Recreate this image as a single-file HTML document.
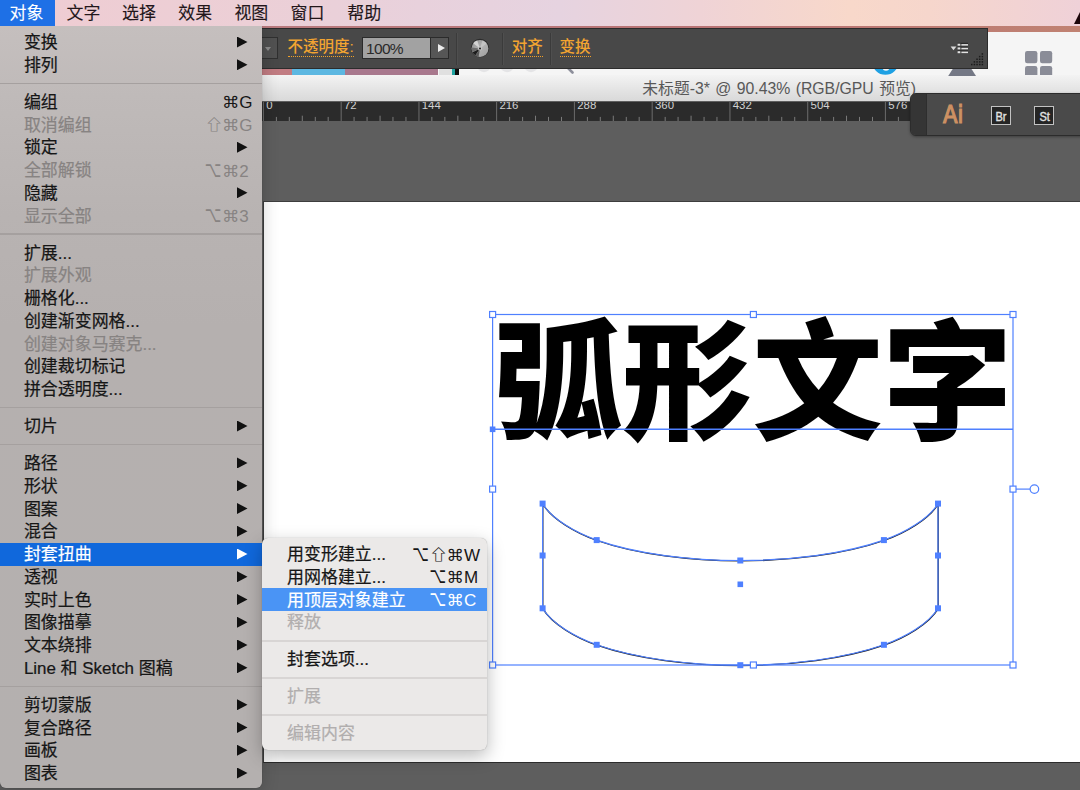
<!DOCTYPE html>
<html lang="zh-CN">
<head>
<meta charset="utf-8">
<title>弧形文字 - 封套扭曲</title>
<style>
*{box-sizing:border-box;margin:0;padding:0}
html,body{width:1080px;height:790px;overflow:hidden;background:#5e5e5e}
body{position:relative;font-family:"Liberation Sans","Noto Sans CJK SC",sans-serif;color:#111}
.abs{position:absolute}
/* ---------- desktop / menubar ---------- */
#menubar{left:0;top:0;width:1080px;height:26.2px;
 background:linear-gradient(90deg,#efccd2 0,#eccfd6 250px,#e8d1dc 420px,#e6d3e0 560px,#efd3d6 700px,#f8d8ca 850px,#f6d6cc 930px,#efd1d8 1080px)}
#menubar .mi{position:absolute;top:0;height:26.2px;line-height:28px;font-size:16.95px;color:#22161a;white-space:nowrap;-webkit-text-stroke:.12px currentColor;margin-left:-.5px}
#menubar .sel{left:0;width:55px;background:#1e70e6;margin-left:0}
#menubar .sel span{color:#fff}
#corner{right:0;top:12px;width:0;height:0;border-left:6px solid transparent;border-bottom:12px solid #1c060a}
/* ---------- window chrome behind ---------- */
#redstrip{left:262px;top:26px;width:818px;height:6px;background:linear-gradient(90deg,#b97a7e,#b87273 60%,#c08272)}
#lightbg{left:262px;top:32px;width:818px;height:43px;background:#f5f5f5}
#titlebar{left:262px;top:75px;width:818px;height:26px;background:linear-gradient(#f3f3f3,#e3e3e3 60%,#d9d9d9);}
#title{left:642.3px;top:75.5px;height:26px;line-height:26px;font-size:15.8px;word-spacing:1px;color:#585858;white-space:nowrap}
#ruler{left:262px;top:101.6px;width:660px;height:19.1px;background:#2b2b2b;overflow:hidden}
#pasteboard{left:262px;top:120.7px;width:818px;height:669px;background:#5e5e5e}
#artboard{left:263px;top:201.4px;width:830px;height:562px;background:#fff;border:1px solid #3e3e3e;border-bottom-color:#2c2c2c}
/* ---------- control bar ---------- */
#ctrl{left:262px;top:27.8px;width:725.8px;height:41.1px;background:#484848;border-top:1px solid #2a2a2a;border-bottom:1px solid #2c2c2c;border-right:1px solid #2c2c2c}
.olink{position:absolute;color:#f2a431;font-weight:500;font-size:15.5px;line-height:20px;white-space:nowrap;border-bottom:1px dotted #f0a028;height:19.8px}
.vsep{top:4.2px;width:2px;height:32px;background:#3b3b3b;border-right:1px solid #4f4f4f}
.aib{top:12px;width:20px;height:18.8px;border:1.5px solid #c2c2c2;background:#252525;color:#e2e2e2;font-size:12px;line-height:20.8px;text-align:center;-webkit-text-stroke:.35px #e2e2e2}
.aib span{display:inline-block;transform:scaleX(.92)}
/* ---------- menus ---------- */
#menu{left:0;top:26px;width:262px;height:762.2px;background:linear-gradient(#c5bfbe 0,#bfbab9 70px,#b8b3b2 190px,#b5b0af 300px,#b4b0af 100%);border-radius:0 0 6px 6px;box-shadow:0 3px 18px rgba(0,0,0,.2),0 0 1px rgba(0,0,0,.4);clip-path:inset(0 -40px -40px -40px)}
.row{position:absolute;left:0;width:262px;height:22.76px;line-height:22.76px;font-size:16.95px;color:#161616;white-space:nowrap}
.row .t{position:absolute;left:23.9px;top:1.5px;height:22.76px;-webkit-text-stroke:.22px currentColor}
.row.dis{color:#878382}
.row.hl{background:#1068dc;color:#fff;height:23.4px}
.sep{position:absolute;left:0;width:262px;height:1.2px;background:#a5a09f}
.arr{position:absolute;left:237px;top:5.9px;width:10.5px;height:11px;background:#111;clip-path:polygon(0 0,100% 50%,0 100%)}
.hl .arr{background:#fff}
.scs{position:absolute;left:0;top:0;overflow:visible}
.scs text{fill:currentColor}
#sub{left:262.4px;top:538.3px;width:224.6px;height:211.8px;background:#ebe9e8;border-radius:6px;box-shadow:0 6px 18px rgba(0,0,0,.28),0 0 1px rgba(0,0,0,.35)}
#sub .row{width:224.6px}
#sub .row .t{left:24.7px}
#sub .row.dis{color:#b1aeae}
#sub .row.hl{background:#4a94f5;color:#fff;height:22.9px}
#sub .sep{width:224.6px;background:#d8d5d4;height:1.6px}
</style>
</head>
<body>
<div id="menubar" class="abs">
  <div class="mi sel"><span style="position:absolute;left:9.6px">对象</span></div>
  <div class="mi" style="left:67px">文字</div>
  <div class="mi" style="left:122.6px">选择</div>
  <div class="mi" style="left:178.8px">效果</div>
  <div class="mi" style="left:234.9px">视图</div>
  <div class="mi" style="left:291px">窗口</div>
  <div class="mi" style="left:347.8px">帮助</div>
  <div id="corner" class="abs"></div>
</div>
<div id="redstrip" class="abs"></div>
<div id="lightbg" class="abs"></div>
<div id="titlebar" class="abs"></div>
<div id="title" class="abs">未标题-3* @ 90.43% (RGB/GPU 预览)</div>
<div id="ruler" class="abs"><svg width="660" height="19.1" viewBox="0 0 660 19.1" style="position:absolute;left:0;top:0">
<g stroke="#6c6c6c" stroke-width="1">
<line x1="1.3" y1="0" x2="1.3" y2="19.1"/>
<line x1="79.1" y1="0" x2="79.1" y2="19.1"/>
<line x1="156.9" y1="0" x2="156.9" y2="19.1"/>
<line x1="234.6" y1="0" x2="234.6" y2="19.1"/>
<line x1="312.4" y1="0" x2="312.4" y2="19.1"/>
<line x1="390.2" y1="0" x2="390.2" y2="19.1"/>
<line x1="468.0" y1="0" x2="468.0" y2="19.1"/>
<line x1="545.8" y1="0" x2="545.8" y2="19.1"/>
<line x1="623.5" y1="0" x2="623.5" y2="19.1"/>
</g><g stroke="#7a7a7a" stroke-width="1">
<line x1="14.3" y1="14.9" x2="14.3" y2="19.1"/>
<line x1="27.2" y1="14.9" x2="27.2" y2="19.1"/>
<line x1="40.2" y1="13.7" x2="40.2" y2="19.1"/>
<line x1="53.2" y1="14.9" x2="53.2" y2="19.1"/>
<line x1="66.1" y1="14.9" x2="66.1" y2="19.1"/>
<line x1="92.0" y1="14.9" x2="92.0" y2="19.1"/>
<line x1="105.0" y1="14.9" x2="105.0" y2="19.1"/>
<line x1="118.0" y1="13.7" x2="118.0" y2="19.1"/>
<line x1="130.9" y1="14.9" x2="130.9" y2="19.1"/>
<line x1="143.9" y1="14.9" x2="143.9" y2="19.1"/>
<line x1="169.8" y1="14.9" x2="169.8" y2="19.1"/>
<line x1="182.8" y1="14.9" x2="182.8" y2="19.1"/>
<line x1="195.8" y1="13.7" x2="195.8" y2="19.1"/>
<line x1="208.7" y1="14.9" x2="208.7" y2="19.1"/>
<line x1="221.7" y1="14.9" x2="221.7" y2="19.1"/>
<line x1="247.6" y1="14.9" x2="247.6" y2="19.1"/>
<line x1="260.6" y1="14.9" x2="260.6" y2="19.1"/>
<line x1="273.5" y1="13.7" x2="273.5" y2="19.1"/>
<line x1="286.5" y1="14.9" x2="286.5" y2="19.1"/>
<line x1="299.5" y1="14.9" x2="299.5" y2="19.1"/>
<line x1="325.4" y1="14.9" x2="325.4" y2="19.1"/>
<line x1="338.3" y1="14.9" x2="338.3" y2="19.1"/>
<line x1="351.3" y1="13.7" x2="351.3" y2="19.1"/>
<line x1="364.3" y1="14.9" x2="364.3" y2="19.1"/>
<line x1="377.2" y1="14.9" x2="377.2" y2="19.1"/>
<line x1="403.2" y1="14.9" x2="403.2" y2="19.1"/>
<line x1="416.1" y1="14.9" x2="416.1" y2="19.1"/>
<line x1="429.1" y1="13.7" x2="429.1" y2="19.1"/>
<line x1="442.1" y1="14.9" x2="442.1" y2="19.1"/>
<line x1="455.0" y1="14.9" x2="455.0" y2="19.1"/>
<line x1="480.9" y1="14.9" x2="480.9" y2="19.1"/>
<line x1="493.9" y1="14.9" x2="493.9" y2="19.1"/>
<line x1="506.9" y1="13.7" x2="506.9" y2="19.1"/>
<line x1="519.8" y1="14.9" x2="519.8" y2="19.1"/>
<line x1="532.8" y1="14.9" x2="532.8" y2="19.1"/>
<line x1="558.7" y1="14.9" x2="558.7" y2="19.1"/>
<line x1="571.7" y1="14.9" x2="571.7" y2="19.1"/>
<line x1="584.6" y1="13.7" x2="584.6" y2="19.1"/>
<line x1="597.6" y1="14.9" x2="597.6" y2="19.1"/>
<line x1="610.6" y1="14.9" x2="610.6" y2="19.1"/>
<line x1="636.5" y1="14.9" x2="636.5" y2="19.1"/>
<line x1="649.5" y1="14.9" x2="649.5" y2="19.1"/>
<line x1="662.4" y1="13.7" x2="662.4" y2="19.1"/>
<line x1="675.4" y1="14.9" x2="675.4" y2="19.1"/>
<line x1="688.4" y1="14.9" x2="688.4" y2="19.1"/>
</g>
<g fill="#d2d2d2" font-family="'Liberation Sans',sans-serif" font-size="10.4">
<text transform="translate(4.1 7.2) scale(1.1 1)">0</text>
<text transform="translate(81.9 7.2) scale(1.1 1)">72</text>
<text transform="translate(159.7 7.2) scale(1.1 1)">144</text>
<text transform="translate(237.4 7.2) scale(1.1 1)">216</text>
<text transform="translate(315.2 7.2) scale(1.1 1)">288</text>
<text transform="translate(393.0 7.2) scale(1.1 1)">360</text>
<text transform="translate(470.8 7.2) scale(1.1 1)">432</text>
<text transform="translate(548.6 7.2) scale(1.1 1)">504</text>
<text transform="translate(626.3 7.2) scale(1.1 1)">576</text>
</g></svg></div>
<div id="pasteboard" class="abs"></div>
<div id="artboard" class="abs"></div>
<div class="abs" style="left:262px;top:68.6px;width:30px;height:6.6px;background:#c17c82"></div>
<div class="abs" style="left:292px;top:68.6px;width:53px;height:6.6px;background:#5cb7e1"></div>
<div class="abs" style="left:345px;top:68.6px;width:92.6px;height:6.6px;background:#a8788d"></div>
<div class="abs" style="left:437.6px;top:68.6px;width:14px;height:6.6px;background:#e0e0e0;border-left:1px solid #f6f6f6"></div>
<div class="abs" style="left:451.6px;top:68.6px;width:3px;height:6.6px;background:#1fa3a0"></div>
<div class="abs" style="left:454.5px;top:68.6px;width:4px;height:6.6px;background:#0c0c0c"></div>
<svg class="abs" style="left:458px;top:66px" width="622" height="10" viewBox="458 66 622 10">
  <g fill="#e4e4e6"><circle cx="484" cy="65" r="7.2"/><circle cx="507" cy="65" r="7.2"/><circle cx="531" cy="65" r="7.2"/></g>
  <path d="M566 66l6.5 6.5" stroke="#8d8f9b" stroke-width="2.6" stroke-linecap="round" fill="none"/>
  <circle cx="885.4" cy="61.6" r="13.2" fill="#1ea0e3"/>
  <circle cx="886" cy="67.4" r="3.3" fill="#f5f5f5"/>
  <path d="M948.2 76L953 68.4h18.2l4.8 7.6z" fill="#747885"/>
</svg>
<svg class="abs" style="left:1020px;top:46px" width="40" height="29" viewBox="1020 46 40 29">
  <g fill="#8a8c97"><rect x="1025" y="51" width="12.4" height="12.2" rx="2.2"/><rect x="1040" y="51" width="12.2" height="12.2" rx="2.2"/><rect x="1025" y="66" width="12.4" height="12.2" rx="2.2"/><rect x="1040" y="66" width="12.2" height="12.2" rx="2.2"/></g>
</svg>

<div id="ctrl" class="abs"><div class="abs" style="left:0;top:8.2px;width:16px;height:22.2px;background:#515151;border:1px solid #303030;border-left:0"></div>
<div class="abs" style="left:3px;top:18.2px;width:0;height:0;border-left:3.5px solid transparent;border-right:3.5px solid transparent;border-top:4.5px solid #8c8c8c"></div>
<div class="olink" style="left:25.5px;top:8.4px;width:66px">不透明度:</div>
<div class="abs" style="left:99.5px;top:8.2px;width:87px;height:22.2px;border:1px solid #2b2b2b;background:#565656">
  <div class="abs" style="left:0;top:0;width:68px;height:20.2px;background:#a2a2a2;border-right:1px solid #2b2b2b;color:#2a2a2a;font-size:15.5px;line-height:21.4px;padding-left:3.6px;letter-spacing:-.7px">100%</div>
  <div class="abs" style="left:75px;top:6.5px;width:0;height:0;border-top:4px solid transparent;border-bottom:4px solid transparent;border-left:7px solid #ececec"></div>
</div>
<div class="abs vsep" style="left:194px"></div>
<svg class="abs" style="left:207.6px;top:9.0px" width="20" height="20" viewBox="0 0 20 20">
  <defs><linearGradient id="gw" x1="0" y1="0" x2="1" y2="1"><stop offset="0" stop-color="#8e8e8e"/><stop offset=".5" stop-color="#b4b4b4"/><stop offset="1" stop-color="#9c9c9c"/></linearGradient></defs>
  <circle cx="10" cy="10" r="9.2" fill="#2c2c2c"/>
  <circle cx="10" cy="10.5" r="8.4" fill="url(#gw)"/>
  <path d="M10 10.5 L2.4 14.2 A8.4 8.4 0 0 0 5.4 17.5 Z" fill="#1d1d1d"/>
  <path d="M10 10.5 L5.4 17.5 A8.4 8.4 0 0 0 8.6 18.8 Z" fill="#5a5a5a"/>
  <path d="M10 10.5 L1.7 9.6 A8.4 8.4 0 0 0 2.4 14.2 Z" fill="#6d6d6d"/>
  <path d="M10 10.5 L3.2 5.2 A8.4 8.4 0 0 1 7.2 2.6 Z" fill="#d4d4d4"/>
  <path d="M10 10.5 L12.5 2.5 A8.4 8.4 0 0 1 16.6 5.6 Z" fill="#c9c9c9" opacity=".8"/>
  <circle cx="10" cy="10.5" r="2.1" fill="#c4c4c4"/>
  <circle cx="10" cy="10.5" r="1" fill="#1a1a1a"/>
</svg>
<div class="abs vsep" style="left:240px"></div>
<div class="olink" style="left:249.8px;top:8.4px">对齐</div>
<div class="abs vsep" style="left:288px"></div>
<div class="olink" style="left:297.6px;top:8.4px">变换</div>
<svg class="abs" style="left:686px;top:12px" width="24" height="16" viewBox="948 40.8 24 16">
  <path d="M950.6 46.3h5.8l-2.9 3.7z" fill="#dcdcdc"/>
  <g fill="#2a2a2a"><rect x="957.6" y="42.6" width="10.4" height="1.2"/><rect x="957.6" y="46.3" width="10.4" height="1.2"/><rect x="957.6" y="50.1" width="10.4" height="1.2"/></g>
  <g fill="#e2e2e2"><rect x="957.6" y="43.5" width="2.7" height="2"/><rect x="961.4" y="43.9" width="6.6" height="1.5"/><rect x="957.6" y="47.2" width="2.7" height="2"/><rect x="961.4" y="47.6" width="6.6" height="1.5"/><rect x="957.6" y="51" width="2.7" height="2"/><rect x="961.4" y="51.4" width="6.6" height="1.5"/></g>
</svg>
<svg class="abs" style="left:708px;top:24px" width="16" height="14" viewBox="970 52.8 16 14"><g fill="#1c1c1c"><rect x="981.60" y="63.60" width="1.5" height="1.5"/><rect x="978.95" y="63.60" width="1.5" height="1.5"/><rect x="976.30" y="63.60" width="1.5" height="1.5"/><rect x="973.65" y="63.60" width="1.5" height="1.5"/><rect x="971.00" y="63.60" width="1.5" height="1.5"/><rect x="981.60" y="60.95" width="1.5" height="1.5"/><rect x="978.95" y="60.95" width="1.5" height="1.5"/><rect x="976.30" y="60.95" width="1.5" height="1.5"/><rect x="973.65" y="60.95" width="1.5" height="1.5"/><rect x="981.60" y="58.30" width="1.5" height="1.5"/><rect x="978.95" y="58.30" width="1.5" height="1.5"/><rect x="976.30" y="58.30" width="1.5" height="1.5"/><rect x="981.60" y="55.65" width="1.5" height="1.5"/><rect x="978.95" y="55.65" width="1.5" height="1.5"/><rect x="981.60" y="53.00" width="1.5" height="1.5"/></g></svg>
</div>
<svg class="abs" id="canvas" style="left:0;top:0" width="1080" height="790" viewBox="0 0 1080 790">
  <text x="492.5" y="429.2" font-family="'Noto Sans CJK SC',sans-serif" font-weight="900" font-size="130" fill="#000">弧形文字</text>
  <!-- envelope shape -->
  <path d="M542.6 503.6 C551.6 518.9 575.8 532.8 596.7 540.1 C636.7 554.1 690.3 560.5 740.3 560.5 C790.3 560.5 843.9 554.1 883.9 540.1 C904.8 532.8 929.0 518.9 938.0 503.6 L938.0 608.3 C929.0 623.6 904.8 637.5 883.9 644.8 C843.9 658.8 790.3 665.2 740.3 665.2 C690.3 665.2 636.7 658.8 596.7 644.8 C575.8 637.5 551.6 623.6 542.6 608.3 Z" fill="none" stroke="#1a1a1a" stroke-width="1.3" transform="translate(0.2,0.4)"/>
  <path d="M542.6 503.6 C551.6 518.9 575.8 532.8 596.7 540.1 C636.7 554.1 690.3 560.5 740.3 560.5 C790.3 560.5 843.9 554.1 883.9 540.1 C904.8 532.8 929.0 518.9 938.0 503.6 L938.0 608.3 C929.0 623.6 904.8 637.5 883.9 644.8 C843.9 658.8 790.3 665.2 740.3 665.2 C690.3 665.2 636.7 658.8 596.7 644.8 C575.8 637.5 551.6 623.6 542.6 608.3 Z" fill="none" stroke="#4f80ff" stroke-width="1.2"/>
  <!-- selection bbox -->
  <g fill="none" stroke="#4f80ff" stroke-width="1.2">
    <rect x="492.6" y="314.5" width="520.4" height="350.5"/>
    <line x1="492.6" y1="429.3" x2="1013" y2="429.3" stroke-width="1.6"/>
    <line x1="1016" y1="489.1" x2="1030" y2="489.1"/>
    <circle cx="1034.4" cy="489.1" r="4.3" fill="#fff"/>
  </g>
  <g fill="#fff" stroke="#4f80ff" stroke-width="1.2">
    <rect x="489.6" y="311.5" width="6" height="6"/><rect x="750.4" y="311.5" width="6" height="6"/><rect x="1010" y="311.5" width="6" height="6"/>
    <rect x="489.6" y="486.1" width="6" height="6"/><rect x="1010" y="486.1" width="6" height="6"/>
    <rect x="489.6" y="662" width="6" height="6"/><rect x="750.4" y="662" width="6" height="6"/><rect x="1010" y="662" width="6" height="6"/>
  </g>
  <!-- anchors -->
  <g fill="#4f80ff">
    <rect x="489.8" y="426.5" width="5.6" height="5.6"/>
    <rect x="539.6" y="500.6" width="6" height="6"/><rect x="539.6" y="552.5" width="6" height="6"/><rect x="539.6" y="605.3" width="6" height="6"/>
    <rect x="935" y="500.6" width="6" height="6"/><rect x="935" y="552.5" width="6" height="6"/><rect x="935" y="605.3" width="6" height="6"/>
    <rect x="593.7" y="537.1" width="6" height="6"/><rect x="880.9" y="537.1" width="6" height="6"/>
    <rect x="593.7" y="641.8" width="6" height="6"/><rect x="880.9" y="641.8" width="6" height="6"/>
    <rect x="737.3" y="557.5" width="6" height="6"/><rect x="737.3" y="662.2" width="6" height="6"/>
    <rect x="737.5" y="581.5" width="5.6" height="5.6"/>
  </g>
</svg>

<div id="aip" class="abs" style="left:910px;top:93.3px;width:176px;height:42.6px;background:#4a4a4a;border:1px solid #2c2c2c;border-radius:6px 0 0 6px;overflow:hidden;box-shadow:0 1px 3px rgba(0,0,0,.35)">
  <div class="abs" style="left:0;top:0;width:15.5px;height:43px;background:#353535;border-right:1px solid #2e2e2e"></div>
  <div class="abs" id="ailogo" style="left:32px;top:5.2px;font-size:24.4px;line-height:32px;color:#cd9163;-webkit-text-stroke:1.1px #cd9163;font-family:'DejaVu Sans Condensed','DejaVu Sans',sans-serif;font-stretch:condensed;transform:scaleX(.97);transform-origin:0 0">Ai</div>
  <div class="abs aib" style="left:80px"><span>Br</span></div>
  <div class="abs aib" style="left:123.2px"><span>St</span></div>
</div>

<div id="menu" class="abs">
<div class="row" style="top:4.62px"><span class="t">变换</span><i class="arr"></i></div>
<div class="row" style="top:27.38px"><span class="t">排列</span><i class="arr"></i></div>
<div class="sep" style="top:56.64px"></div>
<div class="row" style="top:64.34px"><span class="t">编组</span><svg class="scs" width="262" height="23" viewBox="0 0 262 23"><text x="239.35" y="17.6" font-family="'Liberation Sans',sans-serif" font-size="17">G</text><text transform="translate(221.90 17.60) scale(1.06 1.0)" font-family="'DejaVu Sans',sans-serif" font-size="16.5">⌘</text></svg></div>
<div class="row dis" style="top:87.10px"><span class="t">取消编组</span><svg class="scs" width="262" height="23" viewBox="0 0 262 23"><text x="239.35" y="17.6" font-family="'Liberation Sans',sans-serif" font-size="17">G</text><text transform="translate(221.90 17.60) scale(1.06 1.0)" font-family="'DejaVu Sans',sans-serif" font-size="16.5">⌘</text><text transform="translate(204.19 16.60) scale(1.38 1.0)" font-family="'Noto Sans CJK SC',sans-serif" font-size="14.3">⇧</text></svg></div>
<div class="row" style="top:109.86px"><span class="t">锁定</span><i class="arr"></i></div>
<div class="row dis" style="top:132.62px"><span class="t">全部解锁</span><svg class="scs" width="262" height="23" viewBox="0 0 262 23"><text x="239.35" y="17.6" font-family="'Liberation Sans',sans-serif" font-size="17">2</text><text transform="translate(221.90 17.60) scale(1.06 1.0)" font-family="'DejaVu Sans',sans-serif" font-size="16.5">⌘</text><text transform="translate(204.87 17.60) scale(0.9 1.36)" font-family="'DejaVu Sans',sans-serif" font-size="16.0">⌥</text></svg></div>
<div class="row" style="top:155.38px"><span class="t">隐藏</span><i class="arr"></i></div>
<div class="row dis" style="top:178.14px"><span class="t">显示全部</span><svg class="scs" width="262" height="23" viewBox="0 0 262 23"><text x="239.35" y="17.6" font-family="'Liberation Sans',sans-serif" font-size="17">3</text><text transform="translate(221.90 17.60) scale(1.06 1.0)" font-family="'DejaVu Sans',sans-serif" font-size="16.5">⌘</text><text transform="translate(204.87 17.60) scale(0.9 1.36)" font-family="'DejaVu Sans',sans-serif" font-size="16.0">⌥</text></svg></div>
<div class="sep" style="top:207.40px"></div>
<div class="row" style="top:215.10px"><span class="t">扩展...</span></div>
<div class="row dis" style="top:237.86px"><span class="t">扩展外观</span></div>
<div class="row" style="top:260.62px"><span class="t">栅格化...</span></div>
<div class="row" style="top:283.38px"><span class="t">创建渐变网格...</span></div>
<div class="row dis" style="top:306.14px"><span class="t">创建对象马赛克...</span></div>
<div class="row" style="top:328.90px"><span class="t">创建裁切标记</span></div>
<div class="row" style="top:351.66px"><span class="t">拼合透明度...</span></div>
<div class="sep" style="top:380.92px"></div>
<div class="row" style="top:388.62px"><span class="t">切片</span><i class="arr"></i></div>
<div class="sep" style="top:417.88px"></div>
<div class="row" style="top:425.58px"><span class="t">路径</span><i class="arr"></i></div>
<div class="row" style="top:448.34px"><span class="t">形状</span><i class="arr"></i></div>
<div class="row" style="top:471.10px"><span class="t">图案</span><i class="arr"></i></div>
<div class="row" style="top:493.86px"><span class="t">混合</span><i class="arr"></i></div>
<div class="row hl" style="top:516.62px"><span class="t">封套扭曲</span><i class="arr"></i></div>
<div class="row" style="top:539.38px"><span class="t">透视</span><i class="arr"></i></div>
<div class="row" style="top:562.14px"><span class="t">实时上色</span><i class="arr"></i></div>
<div class="row" style="top:584.90px"><span class="t">图像描摹</span><i class="arr"></i></div>
<div class="row" style="top:607.66px"><span class="t">文本绕排</span><i class="arr"></i></div>
<div class="row" style="top:630.42px"><span class="t">Line 和 Sketch 图稿</span><i class="arr"></i></div>
<div class="sep" style="top:659.68px"></div>
<div class="row" style="top:667.38px"><span class="t">剪切蒙版</span><i class="arr"></i></div>
<div class="row" style="top:690.14px"><span class="t">复合路径</span><i class="arr"></i></div>
<div class="row" style="top:712.90px"><span class="t">画板</span><i class="arr"></i></div>
<div class="row" style="top:735.66px"><span class="t">图表</span><i class="arr"></i></div>
</div>
<div id="sub" class="abs">
<div class="row" style="top:4.42px"><span class="t">用变形建立...</span><svg class="scs" width="225" height="23" viewBox="0 0 225 23"><text x="201.90" y="17.6" font-family="'Liberation Sans',sans-serif" font-size="17">W</text><text transform="translate(184.45 17.60) scale(1.06 1.0)" font-family="'DejaVu Sans',sans-serif" font-size="16.5">⌘</text><text transform="translate(166.74 16.60) scale(1.38 1.0)" font-family="'Noto Sans CJK SC',sans-serif" font-size="14.3">⇧</text><text transform="translate(150.22 17.60) scale(0.9 1.36)" font-family="'DejaVu Sans',sans-serif" font-size="16.0">⌥</text></svg></div>
<div class="row" style="top:27.18px"><span class="t">用网格建立...</span><svg class="scs" width="225" height="23" viewBox="0 0 225 23"><text x="201.90" y="17.6" font-family="'Liberation Sans',sans-serif" font-size="17">M</text><text transform="translate(184.45 17.60) scale(1.06 1.0)" font-family="'DejaVu Sans',sans-serif" font-size="16.5">⌘</text><text transform="translate(167.42 17.60) scale(0.9 1.36)" font-family="'DejaVu Sans',sans-serif" font-size="16.0">⌥</text></svg></div>
<div class="row hl" style="top:49.94px"><span class="t">用顶层对象建立</span><svg class="scs" width="225" height="23" viewBox="0 0 225 23"><text x="201.90" y="17.6" font-family="'Liberation Sans',sans-serif" font-size="17">C</text><text transform="translate(184.45 17.60) scale(1.06 1.0)" font-family="'DejaVu Sans',sans-serif" font-size="16.5">⌘</text><text transform="translate(167.42 17.60) scale(0.9 1.36)" font-family="'DejaVu Sans',sans-serif" font-size="16.0">⌥</text></svg></div>
<div class="row dis" style="top:72.70px"><span class="t">释放</span></div>
<div class="sep" style="top:101.96px"></div>
<div class="row" style="top:109.66px"><span class="t">封套选项...</span></div>
<div class="sep" style="top:138.92px"></div>
<div class="row dis" style="top:146.62px"><span class="t">扩展</span></div>
<div class="sep" style="top:175.88px"></div>
<div class="row dis" style="top:183.58px"><span class="t">编辑内容</span></div>
</div>
</body>
</html>
